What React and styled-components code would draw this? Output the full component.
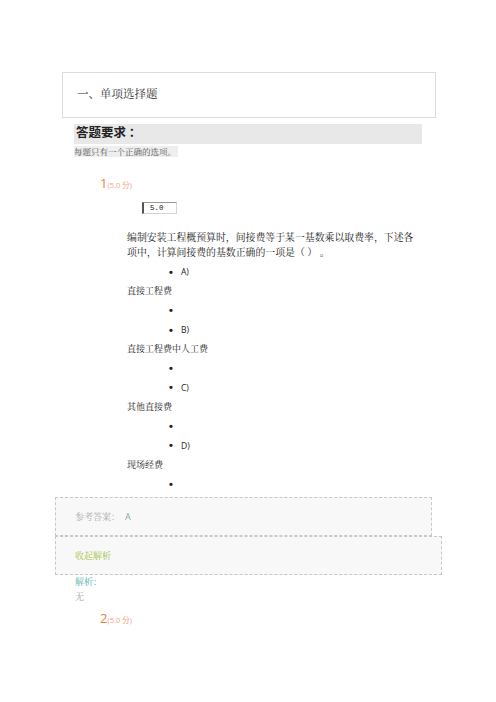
import React from 'react';
import styled, { createGlobalStyle } from 'styled-components';

const GlobalStyle = createGlobalStyle`
  html, body {
    margin: 0;
    padding: 0;
    background: #fff;
  }
  body {
    font-family: "Noto Serif CJK SC", "Noto Sans CJK SC", serif;
    color: #222;
  }
`;

const serif = `"Noto Serif CJK SC", "Noto Sans CJK SC", serif`;
const latin = `"Open Sans", "Liberation Sans", "Noto Sans CJK SC", sans-serif`;

const Page = styled.div`
  width: 496px;
  min-height: 702px;
  padding-top: 72px;
  box-sizing: border-box;
  display: flex;
  flex-direction: column;
`;

const SectionTitle = styled.div`
  margin-left: 62px;
  width: 374px;
  height: 46px;
  box-sizing: border-box;
  border: 1px solid #dcdcdc;
  padding: 0 0 4px 14px;
  display: flex;
  align-items: center;
  font-family: ${serif};
  font-size: 11.5px;
  color: #333;
`;

const Requirement = styled.div`
  margin-left: 74px;
  width: 348px;
  margin-top: 6px;
  display: flex;
  flex-direction: column;
  align-items: flex-start;
`;

const RequirementBar = styled.div`
  align-self: stretch;
  height: 20px;
  line-height: 16px;
  padding-left: 2px;
  background: #e8e8e8;
  font-family: "Noto Sans CJK SC", sans-serif;
  font-weight: 700;
  font-size: 12.5px;
  color: #222;
`;

const RequirementNote = styled.div`
  margin-top: 2px;
  height: 11px;
  line-height: 11px;
  padding-right: 2px;
  background: #eeeeee;
  font-family: ${serif};
  font-size: 8.5px;
  color: #555;
`;

const QuestionHead = styled.div`
  margin-left: 100px;
  margin-top: ${(p) => p.$gap}px;
  height: 16px;
  line-height: 16px;
  font-family: ${latin};
  color: #e8803a;
`;

const QNumber = styled.span`
  font-size: 13px;
`;

const QScore = styled.span`
  font-size: 7.5px;
  color: #f0a588;
`;

const ScoreInput = styled.div`
  margin-left: 142px;
  margin-top: 12px;
  width: 35px;
  height: 12px;
  box-sizing: border-box;
  border: 1px solid #d4d4d4;
  border-left: 2px solid #555;
  border-top-color: #999;
  padding-left: 6px;
  font-family: "Liberation Mono", monospace;
  font-size: 7.5px;
  line-height: 10px;
  color: #111;
`;

const QuestionText = styled.div`
  margin-left: 127px;
  margin-top: 16px;
  width: 296px;
  font-family: ${serif};
  font-size: 9.9px;
  line-height: 15px;
  color: #222;
`;

const Options = styled.ul`
  list-style: none;
  margin: 2px 0 0;
  padding: 0;
`;

const Row = styled.li`
  height: 19.3px;
  display: flex;
  align-items: center;
  padding-left: ${(p) => (p.$text ? 127 : 169)}px;
  font-family: ${(p) => (p.$text ? serif : latin)};
  font-size: ${(p) => (p.$text ? 9 : 8.5)}px;
  color: #222;
`;

const Bullet = styled.span`
  width: 12px;
  font-family: "Liberation Sans", sans-serif;
  font-size: 11px;
  font-weight: 700;
  line-height: 10px;
`;

const AnswerBox = styled.div`
  margin-left: 55px;
  width: ${(p) => p.$width}px;
  height: ${(p) => p.$height}px;
  box-sizing: border-box;
  border: 1px dashed #c8c8c8;
  margin-top: ${(p) => p.$gap}px;
  background: #f8f8f8;
  padding-left: 19px;
  display: flex;
  align-items: center;
  font-family: ${serif};
  font-size: 9px;
  color: ${(p) => p.$color};
`;

const AnswerLetter = styled.span`
  margin-left: 5px;
  font-family: ${latin};
  color: #7fa8a8;
`;

const Note = styled.div`
  margin-left: 75px;
  line-height: ${(p) => p.$lh}px;
  font-family: ${serif};
  font-size: 9px;
  color: ${(p) => p.$color};
`;

const options = [
  { key: 'A)', text: '直接工程费' },
  { key: 'B)', text: '直接工程费中人工费' },
  { key: 'C)', text: '其他直接费' },
  { key: 'D)', text: '现场经费' },
];

export default function App() {
  return (
    <Page>
      <GlobalStyle />
      <SectionTitle>一、单项选择题</SectionTitle>
      <Requirement>
        <RequirementBar>答题要求 ：</RequirementBar>
        <RequirementNote>每题只有一个正确的选项。</RequirementNote>
      </Requirement>

      <QuestionHead $gap={17}>
        <QNumber>1</QNumber>
        <QScore>(5.0 分)</QScore>
      </QuestionHead>
      <ScoreInput>5.0</ScoreInput>
      <QuestionText>
        编制安装工程概预算时，间接费等于某一基数乘以取费率，下述各项中，计算间接费的基数正确的一项是（ ） 。
      </QuestionText>
      <Options>
        {options.map((o) => (
          <React.Fragment key={o.key}>
            <Row>
              <Bullet>•</Bullet>
              {o.key}
            </Row>
            <Row $text>{o.text}</Row>
            <Row>
              <Bullet>•</Bullet>
            </Row>
          </React.Fragment>
        ))}
      </Options>

      <AnswerBox $width={377} $height={39} $gap={3} $color="#aaa">
        参考答案：<AnswerLetter>A</AnswerLetter>
      </AnswerBox>
      <AnswerBox $width={387} $height={39} $gap={0} $color="#9cc43a">
        收起解析
      </AnswerBox>
      <Note $lh={14} $color="#4fb3a8">解析：</Note>
      <Note $lh={15} $color="#999">无</Note>

      <QuestionHead $gap={5}>
        <QNumber>2</QNumber>
        <QScore>(5.0 分)</QScore>
      </QuestionHead>
    </Page>
  );
}
